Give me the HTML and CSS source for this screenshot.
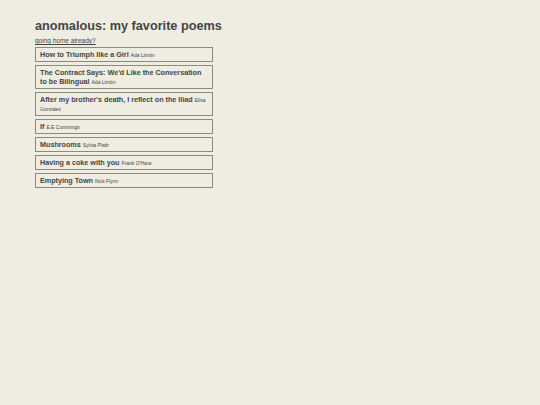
FILE: index.html
```html
<!DOCTYPE html>
<html>
<head>
<meta charset="utf-8">
<link rel="stylesheet" href="styles.css">
</head>
<body>
<div class="page">
  <h1 class="title">anomalous: my favorite poems</h1>
  <a class="home" href="#">going home already?</a>
  <ul class="poems">
    <li class="poem"><span class="name">How to Triumph like a Girl</span> <span class="author">Ada Limón</span></li>
    <li class="poem"><span class="name">The Contract Says: We'd Like the Conversation to be Bilingual</span> <span class="author">Ada Limón</span></li>
    <li class="poem"><span class="name">After my brother's death, I reflect on the Iliad</span> <span class="author">Elisa Gonzalez</span></li>
    <li class="poem"><span class="name">If</span> <span class="author">E.E Cummings</span></li>
    <li class="poem"><span class="name">Mushrooms</span> <span class="author">Sylvia Plath</span></li>
    <li class="poem"><span class="name">Having a coke with you</span> <span class="author">Frank O'Hara</span></li>
    <li class="poem"><span class="name">Emptying Town</span> <span class="author">Nick Flynn</span></li>
  </ul>
</div>
</body>
</html>
```
FILE: styles.css
```css
html, body {
  margin: 0;
  padding: 0;
  background: #efece2;
}
body {
  font-family: "Liberation Sans", Arial, sans-serif;
  color: #454545;
}
.page {
  padding: 17px 35px;
}
.title {
  margin: 0;
  font-size: 12.7px;
  line-height: 18px;
  font-weight: bold;
  color: #454545;
}
.home {
  display: block;
  margin-top: 1px;
  font-size: 6.5px;
  line-height: 9px;
  color: #454545;
  text-decoration: underline;
}
.poems {
  list-style: none;
  margin: 2px 0 0;
  padding: 0;
  width: 178px;
  display: flex;
  flex-direction: column;
  gap: 3px;
}
.poem {
  border: 1px solid #8a8a80;
  padding: 2px 4px;
  font-size: 7.2px;
  font-weight: bold;
  line-height: 9px;
}
.name {
  font-weight: bold;
}
.author {
  font-size: 5px;
  font-weight: normal;
  line-height: 1;
}
```
